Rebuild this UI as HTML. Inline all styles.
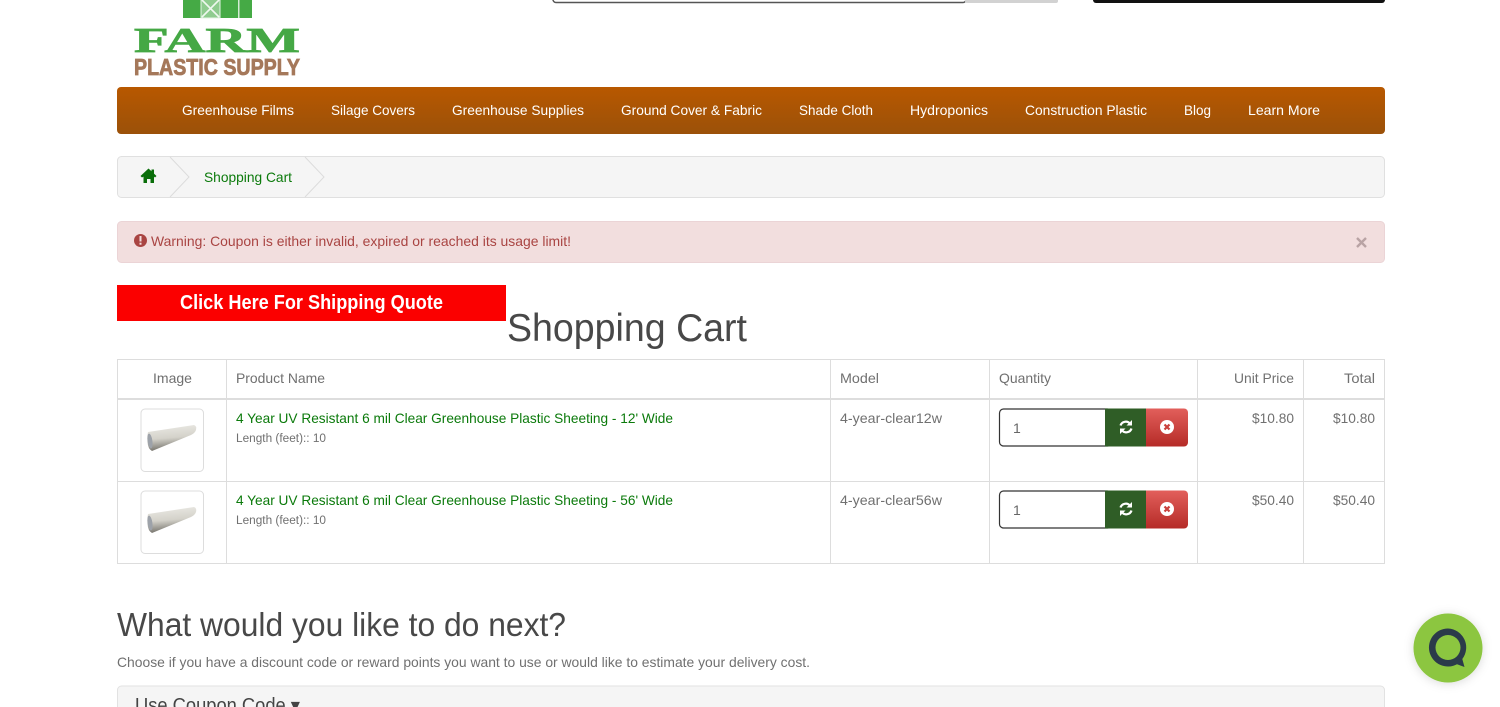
<!DOCTYPE html>
<html lang="en"><head><meta charset="utf-8"><title>Shopping Cart</title>
<style>
html,body{margin:0;padding:0;background:#fff;width:1500px;height:707px;overflow:hidden}
svg{display:block;position:absolute;left:0;top:0}
text{font-family:"Liberation Sans",sans-serif;fill:#707070}
.nav{fill:#fff;font-size:14px}
.g{fill:#0b7a0b;font-size:14px}
.s{font-size:14px}
.xs{font-size:11.5px}
</style></head><body>
<svg width="1500" height="707" viewBox="0 0 1500 707" xmlns="http://www.w3.org/2000/svg">
<defs>
<linearGradient id="n" x1="0" y1="0" x2="0" y2="1"><stop offset="0" stop-color="#b85800"/><stop offset="1" stop-color="#9b5109"/></linearGradient>
<linearGradient id="r" x1="0" y1="0" x2="0" y2="1"><stop offset="0" stop-color="#e25f5b"/><stop offset="1" stop-color="#b52b27"/></linearGradient>
<linearGradient id="pl" x1="0" y1="0" x2="0.15" y2="1"><stop offset="0" stop-color="#ecebe6"/><stop offset=".55" stop-color="#d4d2ca"/><stop offset="1" stop-color="#77756e"/></linearGradient>
<filter id="sh" x="-30%" y="-30%" width="160%" height="160%"><feDropShadow dx="0" dy="1" stdDeviation="5" flood-color="#000" flood-opacity=".15"/></filter>
<g id="roll"><path d="M148 432 L194 425 Q197 426 196 430 Q195 433 191 435 L152 451 Q148 449 147.500 442 Q147 436 148 432Z" fill="url(#pl)"/><ellipse cx="150" cy="441" rx="2.400" ry="7.500" fill="#9da2a9" transform="rotate(-8 150 441)"/></g>
<g id="refresh" fill="none" stroke="#fff" stroke-width="2.2"><path d="M1120.500 425.500a5.500 5.500 0 0 1 9.500-1.800"/><path d="M1131.500 428.500a5.500 5.500 0 0 1-9.500 1.800"/><path d="M1132 420v5.500h-5.500z" fill="#fff" stroke="none"/><path d="M1120 434v-5.500h5.500z" fill="#fff" stroke="none"/></g>
<g id="del"><circle cx="1167" cy="427" r="7" fill="#fff"/><path d="M1164.500 424.500l5 5m0-5l-5 5" stroke="#c9403c" stroke-width="2.200"/></g>
</defs>

<!-- top fragments -->
<rect x="553" y="-10" width="413" height="12.500" rx="3" fill="#fff" stroke="#555" stroke-width="1.500"/>
<rect x="965" y="-10" width="93" height="13" rx="2" fill="#d2d2d2"/>
<rect x="1093" y="-10" width="292" height="13" rx="3" fill="#111"/>

<!-- logo -->
<rect x="183" y="-2" width="69" height="20" fill="#45aa45"/>
<rect x="201" y="-2" width="19" height="20" fill="#8fcc8f" stroke="#e6f4e6"/>
<path d="M202 0L219 17M219 0L202 17" stroke="#f0f8f0" stroke-width="1.600"/>
<rect x="238" y="-2" width="1.500" height="20" fill="#d5ecd5"/>
<text x="134" y="52" textLength="166" lengthAdjust="spacingAndGlyphs" style="font-family:'Liberation Serif',serif;font-weight:700;font-size:35px;fill:#45a845;stroke:#45a845;stroke-width:.8">FARM</text>
<text x="134" y="75" textLength="166" lengthAdjust="spacingAndGlyphs" style="font-weight:700;font-size:23px;fill:#a5785a;stroke:#a5785a;stroke-width:.8">PLASTIC SUPPLY</text>

<!-- nav -->
<rect x="117" y="87" width="1268" height="47" rx="4" fill="url(#n)"/>
<text class="nav" x="182" y="115" textLength="112" lengthAdjust="spacingAndGlyphs">Greenhouse Films</text>
<text class="nav" x="331" y="115" textLength="84" lengthAdjust="spacingAndGlyphs">Silage Covers</text>
<text class="nav" x="452" y="115" textLength="132" lengthAdjust="spacingAndGlyphs">Greenhouse Supplies</text>
<text class="nav" x="621" y="115" textLength="141" lengthAdjust="spacingAndGlyphs">Ground Cover &amp; Fabric</text>
<text class="nav" x="799" y="115" textLength="74" lengthAdjust="spacingAndGlyphs">Shade Cloth</text>
<text class="nav" x="910" y="115" textLength="78" lengthAdjust="spacingAndGlyphs">Hydroponics</text>
<text class="nav" x="1025" y="115" textLength="122" lengthAdjust="spacingAndGlyphs">Construction Plastic</text>
<text class="nav" x="1184" y="115" textLength="27" lengthAdjust="spacingAndGlyphs">Blog</text>
<text class="nav" x="1248" y="115" textLength="72" lengthAdjust="spacingAndGlyphs">Learn More</text>

<!-- breadcrumb -->
<rect x="117.500" y="156.500" width="1267" height="41" rx="4" fill="#f5f5f5" stroke="#e0e0e0"/>
<path d="M170 157L189 177L170 197M305 157L324 177L305 197" fill="none" stroke="#dcdcdc"/>
<path d="M148.500 168.500L151.500 171.300V169.500H154V173.600L156.500 176L155 177.500L154 176.600V183H150.500V179H147V183H143.500V176.600L142 177.500L140.500 176Z" fill="#0a6e0a"/>
<text class="g" x="204" y="182" textLength="88" lengthAdjust="spacingAndGlyphs">Shopping Cart</text>

<!-- alert -->
<rect x="117.500" y="221.500" width="1267" height="41" rx="4" fill="#f2dede" stroke="#ebd4d6"/>
<circle cx="140.500" cy="240.500" r="6.500" fill="#a94442"/>
<rect x="139.500" y="236" width="2" height="5.500" fill="#f2dede"/><rect x="139.500" y="242.700" width="2" height="2" fill="#f2dede"/>
<text x="151" y="246" textLength="420" lengthAdjust="spacingAndGlyphs" style="font-size:14px;fill:#a94442">Warning: Coupon is either invalid, expired or reached its usage limit!</text>
<path d="M1357 238L1366 247M1366 238L1357 247" stroke="#b9a3a4" stroke-width="2.400"/>

<!-- shipping button -->
<rect x="117" y="285" width="389" height="36" fill="#fb0000"/>
<text x="180" y="309" textLength="263" lengthAdjust="spacingAndGlyphs" style="font-weight:700;font-size:20px;fill:#fff">Click Here For Shipping Quote</text>

<text x="507" y="341" textLength="240" lengthAdjust="spacingAndGlyphs" style="font-size:39px;fill:#484848">Shopping Cart</text>

<!-- table -->
<g stroke="#ddd" fill="none">
<rect x="117.500" y="359.500" width="1267" height="204"/>
<path d="M226.500 359V564M830.500 359V564M989.500 359V564M1197.500 359V564M1303.500 359V564M117 481.500H1385"/>
<path d="M117 399H1385" stroke-width="2"/>
</g>
<text class="s" x="153" y="383" textLength="39" lengthAdjust="spacingAndGlyphs">Image</text>
<text class="s" x="236" y="383" textLength="89" lengthAdjust="spacingAndGlyphs">Product Name</text>
<text class="s" x="840" y="383" textLength="39" lengthAdjust="spacingAndGlyphs">Model</text>
<text class="s" x="999" y="383" textLength="52" lengthAdjust="spacingAndGlyphs">Quantity</text>
<text class="s" x="1234" y="383" textLength="60" lengthAdjust="spacingAndGlyphs">Unit Price</text>
<text class="s" x="1344" y="383" textLength="31" lengthAdjust="spacingAndGlyphs">Total</text>

<!-- row 1 -->
<rect x="141" y="409" width="62.500" height="62.500" rx="4" fill="#fff" stroke="#ddd"/>
<use href="#roll"/>
<text class="g" x="236" y="423" textLength="437" lengthAdjust="spacingAndGlyphs">4 Year UV Resistant 6 mil Clear Greenhouse Plastic Sheeting - 12' Wide</text>
<text class="xs" x="236" y="442" textLength="90" lengthAdjust="spacingAndGlyphs">Length (feet):: 10</text>
<text class="s" x="840" y="423" textLength="102" lengthAdjust="spacingAndGlyphs">4-year-clear12w</text>
<rect x="999.500" y="409" width="112" height="37" rx="4" fill="#fff" stroke="#333" stroke-width="1.200"/>
<text x="1013" y="433" style="font-size:14px;fill:#666">1</text>
<rect x="1105" y="408.500" width="42" height="38" fill="#2f5d26"/>
<path d="M1146 408.500h38a4 4 0 0 1 4 4v30a4 4 0 0 1-4 4h-38z" fill="url(#r)"/>
<use href="#refresh"/><use href="#del"/>
<text class="s" x="1252" y="423" textLength="42" lengthAdjust="spacingAndGlyphs">$10.80</text>
<text class="s" x="1333" y="423" textLength="42" lengthAdjust="spacingAndGlyphs">$10.80</text>

<!-- row 2 -->
<rect x="141" y="491" width="62.500" height="62.500" rx="4" fill="#fff" stroke="#ddd"/>
<use href="#roll" y="82"/>
<text class="g" x="236" y="505" textLength="437" lengthAdjust="spacingAndGlyphs">4 Year UV Resistant 6 mil Clear Greenhouse Plastic Sheeting - 56' Wide</text>
<text class="xs" x="236" y="524" textLength="90" lengthAdjust="spacingAndGlyphs">Length (feet):: 10</text>
<text class="s" x="840" y="505" textLength="102" lengthAdjust="spacingAndGlyphs">4-year-clear56w</text>
<rect x="999.500" y="491" width="112" height="37" rx="4" fill="#fff" stroke="#333" stroke-width="1.200"/>
<text x="1013" y="515" style="font-size:14px;fill:#666">1</text>
<rect x="1105" y="490.500" width="42" height="38" fill="#2f5d26"/>
<path d="M1146 490.500h38a4 4 0 0 1 4 4v30a4 4 0 0 1-4 4h-38z" fill="url(#r)"/>
<use href="#refresh" y="82"/><use href="#del" y="82"/>
<text class="s" x="1252" y="505" textLength="42" lengthAdjust="spacingAndGlyphs">$50.40</text>
<text class="s" x="1333" y="505" textLength="42" lengthAdjust="spacingAndGlyphs">$50.40</text>

<!-- next -->
<text x="117" y="636" textLength="449" lengthAdjust="spacingAndGlyphs" style="font-size:33px;fill:#484848">What would you like to do next?</text>
<text class="s" x="117" y="667" textLength="693" lengthAdjust="spacingAndGlyphs">Choose if you have a discount code or reward points you want to use or would like to estimate your delivery cost.</text>
<rect x="117.500" y="686" width="1267" height="40" rx="4" fill="#f5f5f5" stroke="#e2e2e2"/>
<text x="135" y="712" textLength="165" lengthAdjust="spacingAndGlyphs" style="font-size:20px;fill:#444">Use Coupon Code ▾</text>

<!-- chat -->
<circle cx="1448" cy="648" r="34.500" fill="#8cc63f" filter="url(#sh)"/>
<path d="M1448 628.500a19 19 0 1 0 9 35.700l7.500 2.800-2.200-8a19 19 0 0 0-14.300-30.500zm0 6.500a12.500 12.500 0 1 1 0 25a12.500 12.500 0 0 1 0-25z" fill="#2b3a4a" fill-rule="evenodd"/>
</svg>
</body></html>
